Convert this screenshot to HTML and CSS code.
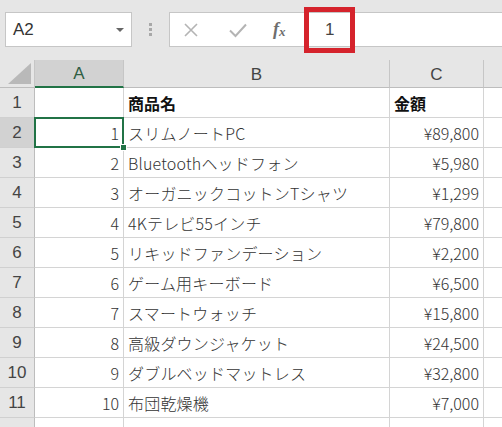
FILE: index.html
```html
<!DOCTYPE html>
<html lang="ja">
<head>
<meta charset="utf-8">
<link rel="stylesheet" href="styles.css">
</head>
<body>
<div class="app">
  <div class="toolbar">
    <div class="namebox">
      <span class="name">A2</span>
      <svg class="caret" width="8" height="5" viewBox="0 0 8 5"><path d="M0 0h8L4 4z" fill="#666"/></svg>
    </div>
    <div class="grip"><i></i><i></i><i></i></div>
    <div class="formula">
      <span class="fbtn">
        <svg width="16" height="16" viewBox="0 0 16 16"><path d="M2 2L14 14M14 2L2 14" stroke="#b4b4b4" stroke-width="1.6" fill="none"/></svg>
      </span>
      <span class="fbtn">
        <svg width="18" height="16" viewBox="0 0 18 16"><path d="M1 8.5L6.5 14L17 2.5" stroke="#b4b4b4" stroke-width="2" fill="none"/></svg>
      </span>
      <span class="fx">f<sub>x</sub></span>
      <span class="fval">1</span>
    </div>
    <div class="highlight"></div>
  </div>
  <div class="sheet">
    <div class="corner"><svg width="23" height="21" viewBox="0 0 23 21"><path d="M23 0V21H0z" fill="#b9b9b9"/></svg></div>
    <div class="ch sel">A</div>
    <div class="ch">B</div>
    <div class="ch">C</div>
    <div class="ch last"></div>

    <div class="rh">1</div><div class="c"></div><div class="c b">商品名</div><div class="c b">金額</div><div class="c last"></div>
    <div class="rh sel">2</div><div class="c n active">1</div><div class="c">スリムノートPC</div><div class="c n">¥89,800</div><div class="c last"></div>
    <div class="rh">3</div><div class="c n">2</div><div class="c">Bluetoothヘッドフォン</div><div class="c n">¥5,980</div><div class="c last"></div>
    <div class="rh">4</div><div class="c n">3</div><div class="c">オーガニックコットンTシャツ</div><div class="c n">¥1,299</div><div class="c last"></div>
    <div class="rh">5</div><div class="c n">4</div><div class="c">4Kテレビ55インチ</div><div class="c n">¥79,800</div><div class="c last"></div>
    <div class="rh">6</div><div class="c n">5</div><div class="c">リキッドファンデーション</div><div class="c n">¥2,200</div><div class="c last"></div>
    <div class="rh">7</div><div class="c n">6</div><div class="c">ゲーム用キーボード</div><div class="c n">¥6,500</div><div class="c last"></div>
    <div class="rh">8</div><div class="c n">7</div><div class="c">スマートウォッチ</div><div class="c n">¥15,800</div><div class="c last"></div>
    <div class="rh">9</div><div class="c n">8</div><div class="c">高級ダウンジャケット</div><div class="c n">¥24,500</div><div class="c last"></div>
    <div class="rh">10</div><div class="c n">9</div><div class="c">ダブルベッドマットレス</div><div class="c n">¥32,800</div><div class="c last"></div>
    <div class="rh">11</div><div class="c n">10</div><div class="c">布団乾燥機</div><div class="c n">¥7,000</div><div class="c last"></div>
    <div class="rh"></div><div class="c"></div><div class="c"></div><div class="c"></div><div class="c last"></div>
  </div>
</div>
</body>
</html>
```
FILE: styles.css
```css
html, body {
  margin: 0;
  padding: 0;
  background: #fff;
}
.app {
  width: 502px;
  height: 427px;
  overflow: hidden;
  font-family: "Noto Sans CJK JP", "Noto Sans", sans-serif;
  color: #222;
}
.toolbar {
  position: relative;
  height: 60px;
  background: #e6e6e6;
  display: flex;
  align-items: flex-start;
  padding-top: 12px;
  box-sizing: border-box;
}
.namebox {
  margin-left: 5px;
  width: 127px;
  height: 35px;
  box-sizing: border-box;
  background: #fff;
  border: 1px solid #c6c6c6;
  display: flex;
  align-items: center;
  justify-content: space-between;
  padding: 0 7px 0 7px;
  font-family: "Liberation Sans", "Noto Sans", sans-serif;
  font-size: 17px;
  color: #333;
}
.caret { margin-top: 1px; }
.grip {
  width: 37px;
  height: 35px;
  display: flex;
  flex-direction: column;
  align-items: center;
  justify-content: center;
  gap: 2px;
}
.grip i {
  display: block;
  width: 3px;
  height: 3px;
  background: #a8a8a8;
}
.formula {
  flex: 1;
  height: 35px;
  box-sizing: border-box;
  background: #fff;
  border: 1px solid #c6c6c6;
  border-right: none;
  display: flex;
  align-items: center;
  padding-left: 13px;
}
.fbtn {
  width: 46px;
  display: flex;
  justify-content: flex-start;
}
.fbtn + .fbtn { width: 38px; padding-left: 0; }
.fx {
  font-family: "Liberation Serif", "DejaVu Serif", serif;
  font-style: italic;
  font-weight: bold;
  font-size: 18px;
  color: #6e6e6e;
  width: 46px;
  padding-left: 6px;
}
.fx sub {
  font-size: 13px;
  vertical-align: -1px;
}
.fval {
  font-family: "Liberation Sans", "Noto Sans", sans-serif;
  font-size: 17px;
  color: #444;
  padding-left: 6px;
}
.highlight {
  position: absolute;
  left: 304px;
  top: 7px;
  width: 51px;
  height: 46px;
  box-sizing: border-box;
  border: 5px solid #d5232c;
}
.sheet {
  display: grid;
  grid-template-columns: 35px 89px 266px 94px 18px;
  grid-template-rows: 28px repeat(12, 30px);
  font-size: 16px;
}
.corner, .ch, .rh {
  background: #e6e6e6;
  box-sizing: border-box;
  color: #444;
  display: flex;
  align-items: center;
  justify-content: center;
  font-family: "Liberation Sans", "Noto Sans", sans-serif;
  font-size: 17px;
}
.corner {
  border-right: 1px solid #c6c6c6;
  border-bottom: 1px solid #bdbdbd;
  align-items: flex-end;
  justify-content: flex-end;
  padding: 0 3px 3px 0;
}
.ch {
  border-right: 1px solid #c6c6c6;
  border-bottom: 1px solid #bdbdbd;
  padding-top: 2px;
}
.ch.sel {
  background: #d2d2d2;
  color: #2f5e43;
  border-bottom: 2px solid #217346;
}
.ch.last { border-right: none; }
.rh {
  border-right: 1px solid #bdbdbd;
  border-bottom: 1px solid #d0d0d0;
  padding-top: 1px;
}
.rh.sel {
  background: #d2d2d2;
}
.c {
  box-sizing: border-box;
  border-right: 1px solid #d4d4d4;
  border-bottom: 1px solid #d4d4d4;
  display: flex;
  align-items: center;
  padding: 1px 3px 0 4px;
  white-space: nowrap;
  overflow: visible;
  color: #333;
  font-size: 16px;
  font-weight: 300;
  letter-spacing: 0.2px;
}
.c.b { font-weight: bold; color: #111; letter-spacing: 0; }
.c.n {
  justify-content: flex-end;
  padding-right: 4px;
  letter-spacing: 0;
}
.c.last { border-right: none; }
.c.active {
  position: relative;
}
.c.active::before {
  content: "";
  position: absolute;
  left: -1px;
  top: -1px;
  right: -1px;
  bottom: -1px;
  border: 2px solid #217346;
}
.c.active::after {
  content: "";
  position: absolute;
  right: -4px;
  bottom: -4px;
  width: 5px;
  height: 5px;
  background: #217346;
  border: 1px solid #fff;
}
```
